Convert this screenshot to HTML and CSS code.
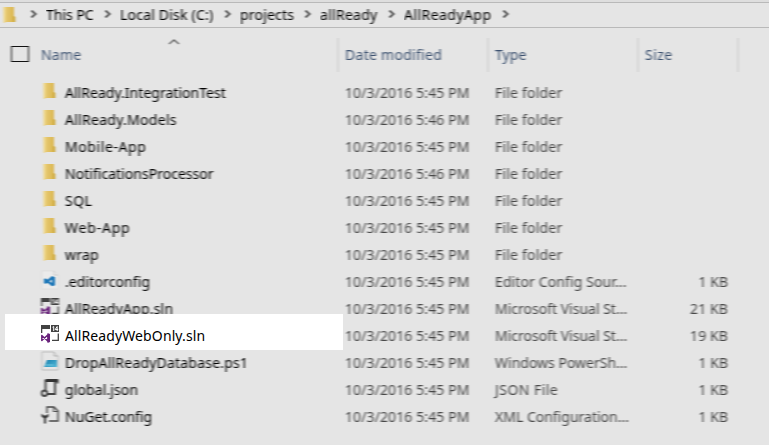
FILE: index.html
```html
<!DOCTYPE html>
<html lang="en">
<head>
<meta charset="utf-8">
<title>AllReadyApp</title>
<link rel="stylesheet" href="styles.css">
</head>
<body>
<svg class="defs" width="0" height="0" aria-hidden="true">
  <defs>
    <filter id="soften" x="0" y="0" width="100%" height="100%" color-interpolation-filters="sRGB"><feGaussianBlur stdDeviation="1.3 0.2"/></filter>
    <linearGradient id="gold" x1="0" x2="1"><stop offset="0" stop-color="#e9cd79"/><stop offset="1" stop-color="#d9b44c"/></linearGradient>
    <linearGradient id="cyan" x1="0" y1="0" x2="1" y2="1"><stop offset="0" stop-color="#1880ae"/><stop offset="1" stop-color="#54b9d8"/></linearGradient>
    <symbol id="folder" viewBox="0 0 20 20"><path d="M3.500 2h10.500v9l1.200 1v5H6l-2 1z" fill="url(#gold)"/><path d="M3.500 2h2v14l-2 2z" fill="#f0d98f"/><path d="M13 11l2.200 1v5H13z" fill="#cda93f"/></symbol>
    <symbol id="chev" viewBox="0 0 8 8"><path d="M1.500.500L5.500 4l-4 3.500" fill="none" stroke="#505050" stroke-width="1.900"/></symbol>
    <symbol id="config" viewBox="0 0 20 20"><path d="M2 1h12l4 4v14H2z" fill="#ebebeb" stroke="#d9d9d9" stroke-width=".6"/><path d="M14 1v4h4" fill="none" stroke="#cccccc"/><path d="M12 6l3 1.200v8L12 16.200 7.500 12.700 5.500 14 4 13v-4L5.500 8.200l2 1.500zM12 9.500L9.500 11.200 12 13z" fill="#1d77b8" fill-rule="evenodd"/></symbol>
    <symbol id="sln" viewBox="0 0 20 20"><path d="M1 1h9v4H2.300v4H1z" fill="#424242"/><path d="M11 1h8v7h-8z" fill="#424242"/><path d="M18.300 9.500v6.800H12" fill="none" stroke="#424242" stroke-width="1.300"/><path d="M12.500 3.200l1.200-.7v4.500M17.200 7V2.500l-2 3h3" fill="none" stroke="#fff" stroke-width="1"/><path d="M8 10.800v6.400L1.800 11.500v5z" fill="none" stroke="#68217a" stroke-width="1.500" stroke-linejoin="round"/><path d="M7.500 9l2.500 1v8l-2.500 1z" fill="#68217a"/></symbol>
    <symbol id="ps" viewBox="0 0 20 20"><path d="M2 1h12l4 4v14H2z" fill="#e6e6e6" stroke="#b4b4b4" stroke-width=".8"/><path d="M14 1v4h4" fill="#ddd" stroke="#aaa" stroke-width=".8"/><path d="M7 9h10v7H4z" fill="url(#cyan)"/><path d="M5.500 14h8" stroke="#70c8e0" stroke-width="1"/></symbol>
    <symbol id="json" viewBox="0 0 20 20"><path d="M5.500 13V2.500h12v3M15 3v13H7" fill="none" stroke="#444" stroke-width="2"/><path d="M6 2.500h12" stroke="#333" stroke-width="3"/><circle cx="4.500" cy="15.200" r="2.700" fill="none" stroke="#444" stroke-width="2"/></symbol>
    <symbol id="nuget" viewBox="0 0 20 20"><path d="M7 8V2h7l4 4v10H9" fill="none" stroke="#484848" stroke-width="1.500"/><path d="M13.500 2v4.500H18" fill="none" stroke="#555" stroke-width="1.200"/><path d="M1.500 8.500v3L4 13.500v5h2v-5l2.500-2v-3L6 10.500H4z" fill="#3c3c3c"/></symbol>
  </defs>
</svg>
<main class="explorer">
  <nav class="path">
    <svg class="icon"><use href="#folder"/></svg>
    <svg class="chev"><use href="#chev"/></svg><span class="crumb w-pc">This PC</span>
    <svg class="chev"><use href="#chev"/></svg><span class="crumb w-disk t2">Local Disk (C:)</span>
    <svg class="chev"><use href="#chev"/></svg><span class="crumb w-projects t2">projects</span>
    <svg class="chev"><use href="#chev"/></svg><span class="crumb w-repo t3">allReady</span>
    <svg class="chev"><use href="#chev"/></svg><span class="crumb w-app t4">AllReadyApp</span>
    <svg class="chev"><use href="#chev"/></svg>
  </nav>
  <header class="cols head">
    <div class="name"><i class="check"></i><span class="t2">Name</span><svg class="sort" viewBox="0 0 12 6"><path d="M1 5l5-4 5 4" fill="none" stroke="#666" stroke-width="1.500"/></svg></div>
    <div class="cell t3">Date modified</div><div class="cell t1">Type</div><div class="cell t4">Size</div><div class="cell"></div>
  </header>
  <section class="rows">
    <div class="cols row"><div class="name"><svg class="icon"><use href="#folder"/></svg><span class="t0">AllReady.IntegrationTest</span></div><div class="cell t1">10/3/2016 5:45 PM</div><div class="cell t2">File folder</div></div>
    <div class="cols row"><div class="name"><svg class="icon"><use href="#folder"/></svg><span class="t3">AllReady.Models</span></div><div class="cell t1">10/3/2016 5:46 PM</div><div class="cell t2">File folder</div></div>
    <div class="cols row"><div class="name"><svg class="icon"><use href="#folder"/></svg><span class="t6">Mobile-App</span></div><div class="cell t1">10/3/2016 5:45 PM</div><div class="cell t2">File folder</div></div>
    <div class="cols row"><div class="name"><svg class="icon"><use href="#folder"/></svg><span class="t0">NotificationsProcessor</span></div><div class="cell t1">10/3/2016 5:46 PM</div><div class="cell t2">File folder</div></div>
    <div class="cols row"><div class="name"><svg class="icon"><use href="#folder"/></svg><span class="t4">SQL</span></div><div class="cell t1">10/3/2016 5:45 PM</div><div class="cell t2">File folder</div></div>
    <div class="cols row"><div class="name"><svg class="icon"><use href="#folder"/></svg><span class="t8">Web-App</span></div><div class="cell t1">10/3/2016 5:45 PM</div><div class="cell t2">File folder</div></div>
    <div class="cols row"><div class="name"><svg class="icon"><use href="#folder"/></svg><span class="t2">wrap</span></div><div class="cell t1">10/3/2016 5:45 PM</div><div class="cell t2">File folder</div></div>
    <div class="cols row"><div class="name"><svg class="icon"><use href="#config"/></svg><span class="t1">.editorconfig</span></div><div class="cell t1">10/3/2016 5:45 PM</div><div class="cell t1">Editor Config Sour...</div><div class="cell size">1 KB</div></div>
    <div class="cols row"><div class="name"><svg class="icon"><use href="#sln"/></svg><span class="t2">AllReadyApp.sln</span></div><div class="cell t1">10/3/2016 5:45 PM</div><div class="cell">Microsoft Visual St...</div><div class="cell size t1">21 KB</div></div>
    <div class="cols row"><div class="name"></div><div class="cell t1">10/3/2016 5:45 PM</div><div class="cell">Microsoft Visual St...</div><div class="cell size t1">19 KB</div></div>
    <div class="cols row"><div class="name"><svg class="icon"><use href="#ps"/></svg><span class="t2">DropAllReadyDatabase.ps1</span></div><div class="cell t1">10/3/2016 5:45 PM</div><div class="cell">Windows PowerSh...</div><div class="cell size">1 KB</div></div>
    <div class="cols row"><div class="name"><svg class="icon"><use href="#json"/></svg><span class="t1">global.json</span></div><div class="cell t1">10/3/2016 5:45 PM</div><div class="cell t4">JSON File</div><div class="cell size">1 KB</div></div>
    <div class="cols row"><div class="name"><svg class="icon"><use href="#nuget"/></svg><span>NuGet.config</span></div><div class="cell t1">10/3/2016 5:45 PM</div><div class="cell">XML Configuration...</div><div class="cell size">1 KB</div></div>
  </section>
</main>
<div class="spotlight"><svg class="icon"><use href="#sln"/></svg><span class="t1">AllReadyWebOnly.sln</span></div>
</body>
</html>
```

FILE: styles.css
```css
* { box-sizing: border-box; }
body { margin: 0; width: 769px; height: 445px; overflow: hidden; position: relative; background: #e5e5e5; font: 14px/27px "Noto Sans", "Open Sans", sans-serif; color: #000; }
.defs { position: absolute; }
.explorer { width: 769px; height: 445px; background: #e5e5e5; border-top: 2px solid #dedede; }
.icon { width: 20px; height: 20px; flex: none; }

.path { height: 26px; border-top: 1px solid #b9b9b9; border-bottom: 1px solid #b9b9b9; display: flex; align-items: center; }
.path > * { filter: url(#soften); }
.chev { width: 12px; height: 8px; margin: 0 0 2px 8px; flex: none; }
.crumb { height: 24px; line-height: 24px; white-space: nowrap; margin-left: 6px; }
.w-pc { width: 48px; }
.w-disk { width: 94px; }
.w-projects { width: 54px; }
.w-repo { width: 58px; }
.w-app { width: 88px; }

.cols { display: grid; grid-template-columns: 337px 150px 150px 100px 1fr; }
.cell { padding-left: 8px; white-space: nowrap; }
.head, .rows { filter: url(#soften); }
.head { height: 32px; margin-top: 10px; color: #3c516f; line-height: 34px; }
.head .cell { border-left: 2px solid #d6d6d6; padding-left: 6px; }
.name { display: flex; align-items: center; position: relative; white-space: nowrap; }
.row { height: 27px; color: #484848; }
.row .name { padding-left: 40px; gap: 5px; color: #000; }
.row .icon { margin-bottom: 3px; }
.rows { margin-top: 9px; height: 366px; }
.size { text-align: right; padding-right: 9px; }
.check { width: 18px; height: 16px; margin: 0 12px 2px 11px; border: 1px solid #111; border-width: 1px; }
.sort { position: absolute; left: 168px; top: 1px; width: 12px; height: 6px; }

.spotlight { position: absolute; left: 5px; top: 314px; width: 338px; height: 36px; padding: 6px 0 0 35px; background: #fff; display: flex; gap: 5px; }
.spotlight .icon { margin-top: 4px; }
.spotlight span { line-height: 32px; }

.t0 { letter-spacing: .03px; }
.t1 { letter-spacing: .11px; }
.t2 { letter-spacing: .2px; }
.t3 { letter-spacing: .28px; }
.t4 { letter-spacing: .45px; }
.t6 { letter-spacing: .59px; }
.t8 { letter-spacing: .8px; }
```
